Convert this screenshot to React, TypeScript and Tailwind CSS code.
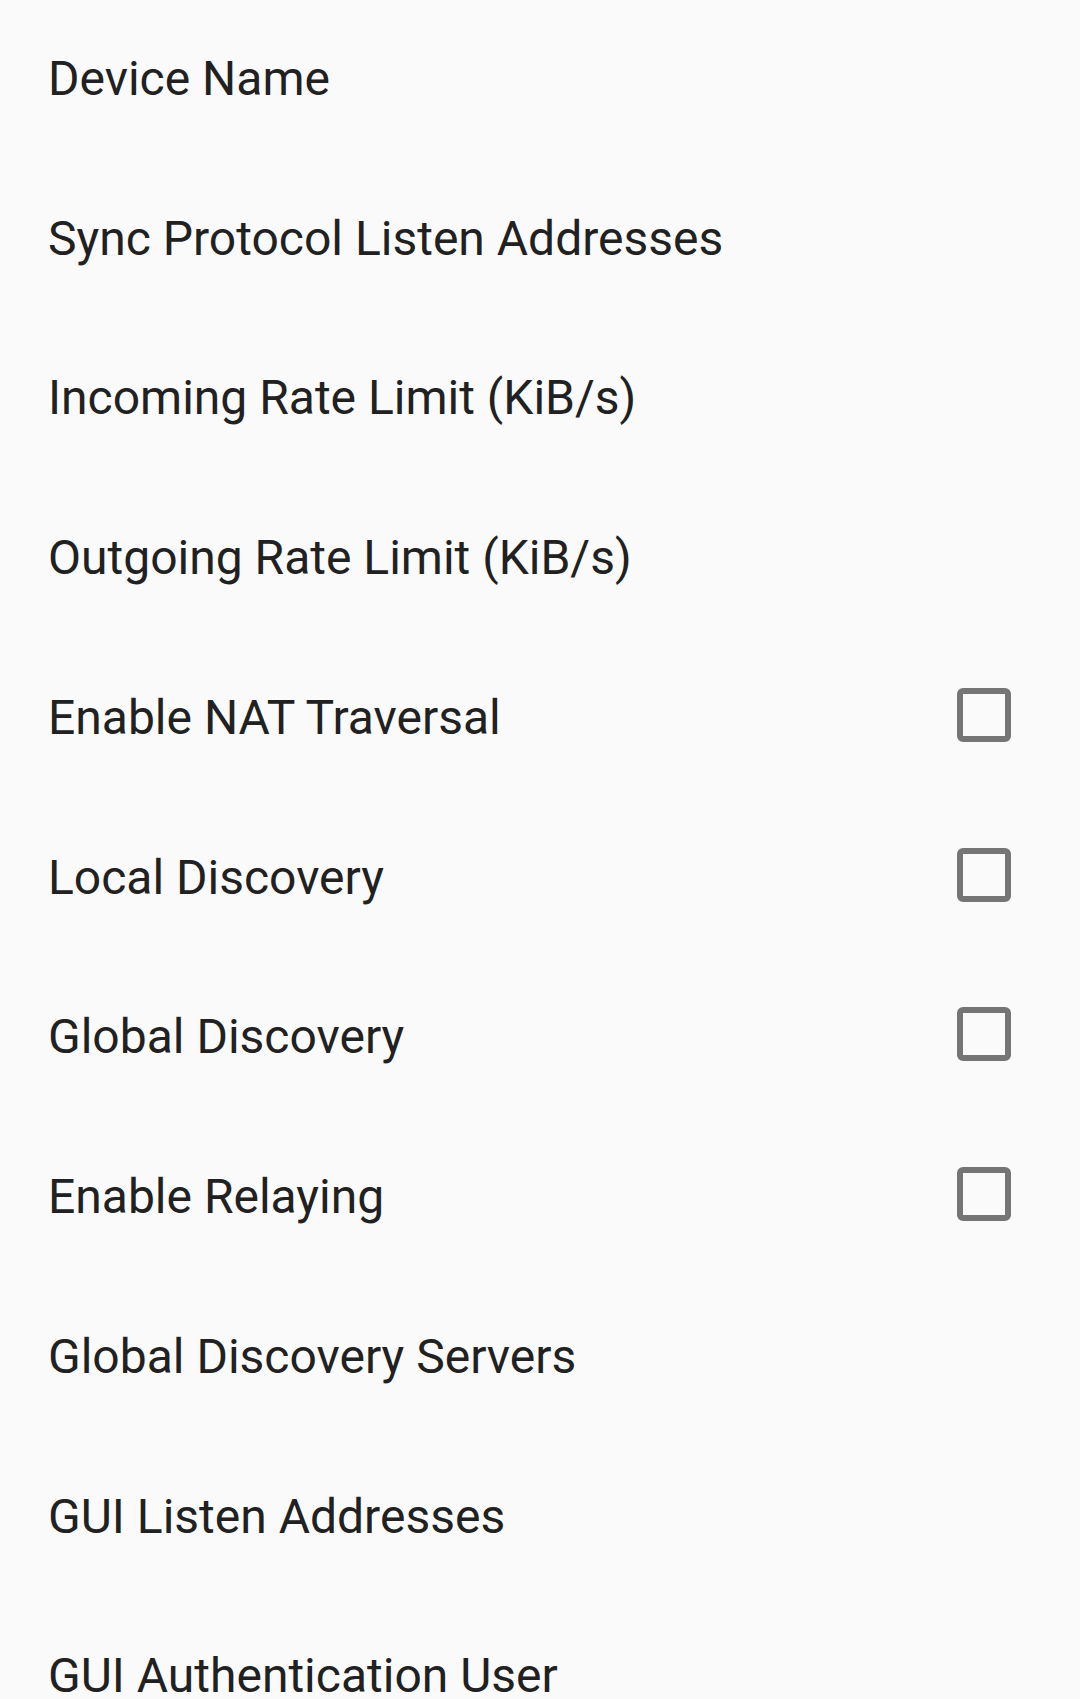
const settings: { label: string; checkbox?: boolean }[] = [
  { label: "Device Name" },
  { label: "Sync Protocol Listen Addresses" },
  { label: "Incoming Rate Limit (KiB/s)" },
  { label: "Outgoing Rate Limit (KiB/s)" },
  { label: "Enable NAT Traversal", checkbox: true },
  { label: "Local Discovery", checkbox: true },
  { label: "Global Discovery", checkbox: true },
  { label: "Enable Relaying", checkbox: true },
  { label: "Global Discovery Servers" },
  { label: "GUI Listen Addresses" },
  { label: "GUI Authentication User" },
];

export default function App() {
  return (
    <div className="h-[1699px] w-[1080px] overflow-hidden bg-[#fafafa] font-['Roboto',sans-serif]">
      <ul className="mt-[-1px]">
        {settings.map((s) => (
          <li key={s.label} className="flex h-[159.75px] items-center justify-between pl-[48px] pr-[69px]">
            <span className="text-[48px] text-[#212121]">{s.label}</span>
            {s.checkbox && (
              <span className="mb-[6px] h-[54px] w-[54px] rounded-[6px] border-[6px] border-[#757575]" />
            )}
          </li>
        ))}
      </ul>
    </div>
  );
}
